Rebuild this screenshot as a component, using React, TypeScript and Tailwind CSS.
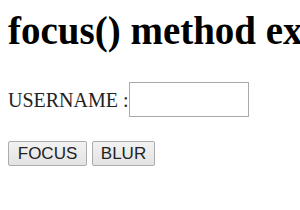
export default function App() {
  return (
    <div className="min-h-screen overflow-hidden bg-white pl-2 text-black" style={{ fontFamily: '"Liberation Serif", "Times New Roman", serif' }}>
      <h1 className="pt-[11px] whitespace-nowrap text-[39px] font-bold leading-none">focus() method example</h1>

      <div className="mt-[32px] flex items-center">
        <label className="whitespace-pre text-[20px] leading-none text-[#222]">USERNAME :</label>
        <input
          type="text"
          className="h-[35px] w-[120px] border border-[#a9a9a9] bg-white px-1 outline-none"
        />
      </div>

      <div className="mt-[24px] flex gap-[5px] font-['Liberation_Sans',Arial,sans-serif] text-[17px] leading-none text-[#222]">
        <button className="h-[25px] w-[79px] rounded-[2px] border border-[#acacac] bg-gradient-to-b from-[#f2f2f2] to-[#e3e3e3]">
          FOCUS
        </button>
        <button className="h-[25px] w-[63px] rounded-[2px] border border-[#acacac] bg-gradient-to-b from-[#f2f2f2] to-[#e3e3e3]">
          BLUR
        </button>
      </div>
    </div>
  );
}
